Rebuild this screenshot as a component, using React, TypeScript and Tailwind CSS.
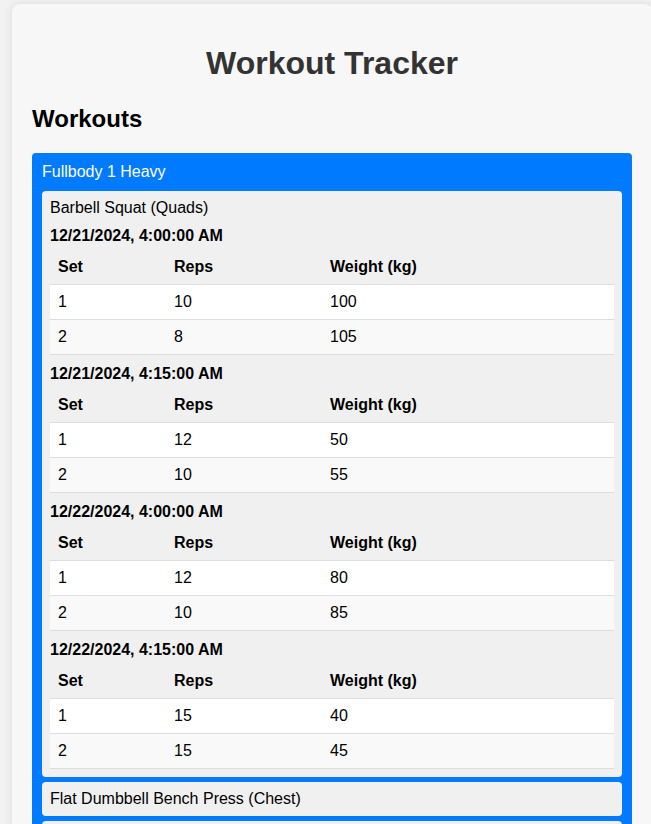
import React from "react";

type Row = [number, number, number];
const sessions: { date: string; rows: Row[] }[] = [
  { date: "12/21/2024, 4:00:00 AM", rows: [[1, 10, 100], [2, 8, 105]] },
  { date: "12/21/2024, 4:15:00 AM", rows: [[1, 12, 50], [2, 10, 55]] },
  { date: "12/22/2024, 4:00:00 AM", rows: [[1, 12, 80], [2, 10, 85]] },
  { date: "12/22/2024, 4:15:00 AM", rows: [[1, 15, 40], [2, 15, 45]] },
];

function SessionTable({ date, rows }: { date: string; rows: Row[] }) {
  return (
    <div>
      <div className="mt-[10px] mb-[5px] font-bold leading-[18px] text-black">{date}</div>
      <table className="w-full table-fixed border-collapse">
        <colgroup>
          <col className="w-[116px]" />
          <col className="w-[156px]" />
          <col />
        </colgroup>
        <thead>
          <tr>
            <th className="border-b border-[#dddddd] p-2 text-left font-bold leading-[18px]">Set</th>
            <th className="border-b border-[#dddddd] p-2 text-left font-bold leading-[18px]">Reps</th>
            <th className="border-b border-[#dddddd] p-2 text-left font-bold leading-[18px]">Weight (kg)</th>
          </tr>
        </thead>
        <tbody>
          {rows.map((r, i) => (
            <tr key={i} className={i % 2 === 0 ? "bg-white" : "bg-[#f9f9f9]"}>
              <td className="border-b border-[#dddddd] p-2 leading-[18px]">{r[0]}</td>
              <td className="border-b border-[#dddddd] p-2 leading-[18px]">{r[1]}</td>
              <td className="border-b border-[#dddddd] p-2 leading-[18px]">{r[2]}</td>
            </tr>
          ))}
        </tbody>
      </table>
    </div>
  );
}

export default function App() {
  return (
    <div
      className="min-h-screen w-full overflow-hidden bg-[#f2f2f2] pt-1 text-[16px] text-black"
      style={{ fontFamily: '"Liberation Sans", Arial, sans-serif' }}
    >
      <div className="ml-3 w-[640px] rounded-lg bg-[#f7f7f7] px-5 pt-5 pb-5 shadow-[0_0_10px_rgba(0,0,0,0.1)]">
        <h1 className="mt-[21px] mb-[23px] text-center text-[32px] font-bold leading-[37px] text-[#333333]">
          Workout Tracker
        </h1>
        <h2 className="mb-[20px] text-[24px] font-bold leading-[28px] text-black">Workouts</h2>
        <div className="w-[600px] rounded bg-[#007bff] p-[10px]">
          <div className="mb-[10px] leading-[18px] text-white">Fullbody 1 Heavy</div>
          <div className="flex flex-col gap-[5px]">
            <div className="rounded bg-[#f0f0f0] p-2">
              <div className="leading-[18px]">Barbell Squat (Quads)</div>
              {sessions.map((s, i) => (
                <SessionTable key={i} date={s.date} rows={s.rows} />
              ))}
            </div>
            <div className="rounded bg-[#f0f0f0] p-2 leading-[18px]">Flat Dumbbell Bench Press (Chest)</div>
            <div className="h-[34px] rounded bg-[#f0f0f0]"></div>
          </div>
        </div>
      </div>
    </div>
  );
}
